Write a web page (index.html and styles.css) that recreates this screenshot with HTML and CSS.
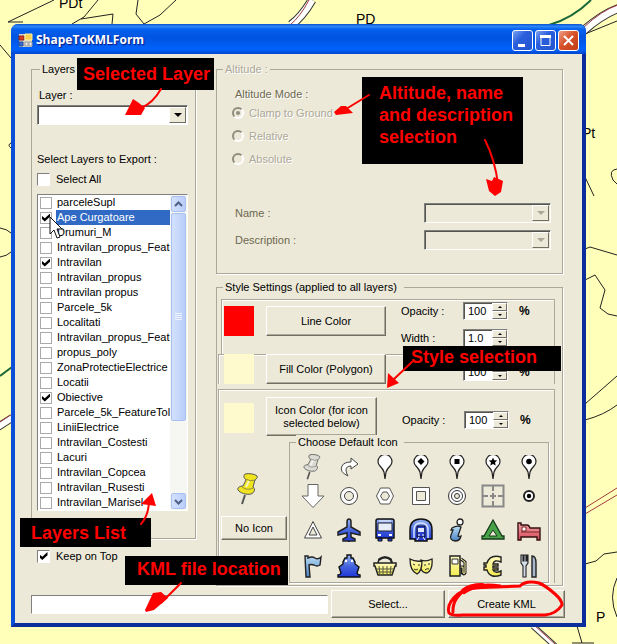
FILE: index.html
```html
<!DOCTYPE html>
<html lang="en">
<head>
<meta charset="utf-8">
<title>ShapeToKMLForm</title>
<link rel="stylesheet" href="styles.css">
</head>
<body>
<svg class="map" width="617" height="644" viewBox="0 0 617 644" aria-hidden="true">
  <g fill="none" stroke="#222" stroke-width="1">
    <path d="M8 22L54 0M8 22H23M72 24L84 17L98 0M81 19L113 14L112 24M138 0L136 14L144 24M144 24L160 15L176 0M0 45L11 58M11 143Q7 145 11 148M0 228Q7 229 11 233M0 257Q7 256 11 252"/>
    <path d="M585 249L590 247L617 255M585 280L595 275L599 281L605 290L600 308L608 314L617 316M617 169Q608 170 613 180L617 184M617 21L585 34M585 177L594 196M585 404L617 376M585 420Q604 415 617 405M585 564L596 561L604 554L617 552M617 578Q608 597 617 617M577 626L582 643M572 643H594"/>
  </g>
  <g fill="none">
    <path d="M312 0Q302 17 291 25" stroke="#333" stroke-width="9"/>
    <path d="M312 0Q302 17 291 25" stroke="#fff" stroke-width="7"/>
    <path d="M309 0Q300 17 290 25" stroke="#a23c40"/>
    <path d="M583 31Q604 13 620 8" stroke="#333" stroke-width="9"/>
    <path d="M583 31Q604 13 620 8" stroke="#fff" stroke-width="7"/>
    <path d="M583 28Q602 10 618 5" stroke="#a23c40"/>
    <path d="M-2 427L12 418" stroke="#333" stroke-width="8"/>
    <path d="M-2 427L12 418" stroke="#fff" stroke-width="6"/>
    <path d="M0 422L12 414" stroke="#a23c40"/>
    <path d="M533 626L555 646" stroke="#333" stroke-width="6"/>
    <path d="M533 626L555 646" stroke="#fff" stroke-width="4"/>
    <path d="M534 625L556 645M585 508L617 488M585 514L617 495" stroke="#a23c40"/>
    <path d="M549 25Q573 18 591 0M0 376L12 367" stroke="#1b6837" stroke-width="2"/>
  </g>
  <g class="map-text"><text x="59" y="8">PDt</text><text x="356" y="24">PD</text><text x="582" y="138">Pt</text><text x="596" y="622">P</text></g>
</svg>

<svg class="defs" width="0" height="0" aria-hidden="true">
  <symbol id="pin" viewBox="0 0 24 32">
    <path d="M8 22L5 31" stroke="#555" stroke-width="2"/>
    <path d="M8 1C12 0 18 1 20 3C21 5 19 6 18 7L16 14C19 16 17 20 14 21C9 22 3 20 1 17C0 14 4 13 6 13L9 7C7 5 6 3 8 1Z" fill="currentColor" stroke="#555"/>
    <path d="M9 6Q13 9 18 7M5 14Q10 18 16 15" fill="none" stroke="#555" stroke-opacity=".6"/>
    <path d="M12 8L9 14" stroke="#fff" stroke-opacity=".7" stroke-width="2"/>
  </symbol>
  <symbol id="balloon" viewBox="0 0 24 24">
    <path d="M12 24L11 17Q10 14 7 11Q5 9 5 6.500A7 7 0 0 1 19 6.500Q19 9 17 11Q14 14 13 17Z" fill="#fff" stroke="#222" stroke-width="1.200"/>
  </symbol>
  <linearGradient id="blue" x2="0" y2="1"><stop offset="0" stop-color="#9ab8f4"/><stop offset=".5" stop-color="#4565dc"/><stop offset="1" stop-color="#2038d8"/></linearGradient>
  <linearGradient id="sky" x2="0" y2="1"><stop offset="0" stop-color="#b8dcf4"/><stop offset="1" stop-color="#4b84c4"/></linearGradient>
  <linearGradient id="rose" x2="0" y2="1"><stop offset="0" stop-color="#f4a8ac"/><stop offset="1" stop-color="#d54858"/></linearGradient>
  <linearGradient id="lemon" x2="0" y2="1"><stop offset="0" stop-color="#fffbc0"/><stop offset="1" stop-color="#f4ec50"/></linearGradient>
</svg>

<main class="window">
  <header class="titlebar">
    <svg width="15" height="15" viewBox="0 0 15 15" aria-hidden="true"><path d="M1 1h13v13H1z" fill="#d8d6cc"/><path d="M1 3h5v4H1z" fill="#d83c28" stroke="#8c2410"/><path d="M7 1h7v6H7z" fill="#f8d050" stroke="#fff0a0"/><path d="M1 9h4v4H1z" fill="#3c6cd0" stroke="#234a9c"/><path d="M7 9h3v4H7zM11 9h3v4h-3z" fill="#eee" stroke="#999"/></svg>
    <h1>ShapeToKMLForm</h1>
    <button class="cap" aria-label="Minimize"><svg width="19" height="19"><path d="M5 13h7v3H5z" fill="#fff"/></svg></button>
    <button class="cap" aria-label="Maximize"><svg width="19" height="19"><path d="M5 6.500v8h9v-8z" fill="none" stroke="#fff"/><path d="M4 4h11v3H4z" fill="#fff"/></svg></button>
    <button class="cap close" aria-label="Close"><svg width="19" height="19"><path d="M5 5l9 9M14 5l-9 9" stroke="#fff" stroke-width="2"/></svg></button>
  </header>

  <form class="client">
    <div class="columns">
      <div class="left">
        <fieldset class="group layers">
          <legend>Layers</legend>
          <label class="layer-label" for="layer">Layer :</label>
          <div class="combo"><select id="layer"></select><span class="drop"></span></div>
          <p class="export">Select Layers to Export :</p>
          <label class="check"><input type="checkbox">Select All</label>
          <div class="list">
            <ul>
              <li><label><input type="checkbox"><span>parceleSupl</span></label></li>
              <li class="selected"><label><input type="checkbox" checked><span>Ape Curgatoare</span></label></li>
              <li><label><input type="checkbox"><span>Drumuri_M</span></label></li>
              <li><label><input type="checkbox"><span>Intravilan_propus_Featu</span></label></li>
              <li><label><input type="checkbox" checked><span>Intravilan</span></label></li>
              <li><label><input type="checkbox"><span>Intravilan_propus</span></label></li>
              <li><label><input type="checkbox"><span>Intravilan propus</span></label></li>
              <li><label><input type="checkbox"><span>Parcele_5k</span></label></li>
              <li><label><input type="checkbox"><span>Localitati</span></label></li>
              <li><label><input type="checkbox"><span>Intravilan_propus_Featu</span></label></li>
              <li><label><input type="checkbox"><span>propus_poly</span></label></li>
              <li><label><input type="checkbox"><span>ZonaProtectieElectrice</span></label></li>
              <li><label><input type="checkbox"><span>Locatii</span></label></li>
              <li><label><input type="checkbox" checked><span>Obiective</span></label></li>
              <li><label><input type="checkbox"><span>Parcele_5k_FeatureTol</span></label></li>
              <li><label><input type="checkbox"><span>LiniiElectrice</span></label></li>
              <li><label><input type="checkbox"><span>Intravilan_Costesti</span></label></li>
              <li><label><input type="checkbox"><span>Lacuri</span></label></li>
              <li><label><input type="checkbox"><span>Intravilan_Copcea</span></label></li>
              <li><label><input type="checkbox"><span>Intravilan_Rusesti</span></label></li>
              <li><label><input type="checkbox"><span>Intravilan_Marisel</span></label></li>
            </ul>
            <div class="scroll">
              <span class="arrow"><svg width="13" height="13"><path d="M3 8l3.500-3.500L10 8" fill="none" stroke="#4d6185" stroke-width="2"/></svg></span>
              <span class="thumb"><svg width="7" height="8"><path d="M0 .5h7M0 2.500h7M0 4.500h7M0 6.500h7" stroke="#eef4fe"/></svg></span>
              <span class="arrow end"><svg width="13" height="13"><path d="M3 5l3.500 3.500L10 5" fill="none" stroke="#4d6185" stroke-width="2"/></svg></span>
            </div>
          </div>
        </fieldset>
        <label class="check keep"><input type="checkbox" checked>Keep on Top</label>
      </div>

      <div class="right">
        <fieldset class="group altitude" disabled>
          <legend>Altitude :</legend>
          <p class="mode">Altitude Mode :</p>
          <label class="radio"><input type="radio" name="mode" checked>Clamp to Ground</label>
          <label class="radio"><input type="radio" name="mode">Relative</label>
          <label class="radio"><input type="radio" name="mode">Absolute</label>
          <div class="pair first"><label for="name">Name :</label><div class="combo"><select id="name"></select><span class="drop"></span></div></div>
          <div class="pair"><label for="desc">Description :</label><div class="combo"><select id="desc"></select><span class="drop"></span></div></div>
        </fieldset>

        <fieldset class="group style">
          <legend>Style Settings (applied to all layers)</legend>
          <section class="panel line">
            <span class="swatch red"></span>
            <button type="button" class="btn">Line Color</button>
            <div class="fields">
              <label for="o1">Opacity :</label><div class="spin"><input id="o1" value="100"><button type="button" aria-label="Up"></button><button type="button" class="down" aria-label="Down"></button></div><b>%</b>
              <label for="w1">Width :</label><div class="spin"><input id="w1" value="1.0"><button type="button" aria-label="Up"></button><button type="button" class="down" aria-label="Down"></button></div>
            </div>
          </section>
          <section class="panel fill">
            <span class="swatch"></span>
            <button type="button" class="btn">Fill Color (Polygon)</button>
            <div class="fields">
              <div class="spin"><input aria-label="Fill opacity" value="100"><button type="button" aria-label="Up"></button><button type="button" class="down" aria-label="Down"></button></div><b>%</b>
            </div>
          </section>
          <section class="panel icon">
            <div class="icon-top">
              <span class="swatch"></span>
              <button type="button" class="btn">Icon Color (for icon selected below)</button>
              <div class="fields">
                <label for="o3">Opacity :</label><div class="spin"><input id="o3" value="100"><button type="button" aria-label="Up"></button><button type="button" class="down" aria-label="Down"></button></div><b>%</b>
              </div>
            </div>
            <div class="icon-bottom">
              <div class="current">
                <svg class="pin-now" width="24" height="32"><use href="#pin"/></svg>
                <button type="button" class="btn">No Icon</button>
              </div>
              <fieldset class="group chooser">
                <legend>Choose Default Icon</legend>
                <div class="icons">
                  <button type="button" aria-label="Pushpin"><svg class="pin-grey"><use href="#pin"/></svg></button>
                  <button type="button" aria-label="Track"><svg><path d="M11 21Q2 17 5 11Q7 7 14 7V3L21 9L14 14V11Q9 11 9 15Q9 18 11 21Z" fill="#fff" stroke="#444"/></svg></button>
                  <button type="button" aria-label="Blank marker"><svg><use href="#balloon"/></svg></button>
                  <button type="button" aria-label="Diamond marker"><svg><use href="#balloon"/><path d="M12 3l3.500 3.500L12 10 8.500 6.500z"/></svg></button>
                  <button type="button" aria-label="Square marker"><svg><use href="#balloon"/><path d="M9.500 4h5v5h-5z"/></svg></button>
                  <button type="button" aria-label="Star marker"><svg><use href="#balloon"/><path d="M12 2.500l1.200 2.700 3 .3-2.200 2 .7 3L12 9l-2.700 1.500.7-3-2.200-2 3-.3z"/></svg></button>
                  <button type="button" aria-label="Circle marker"><svg><use href="#balloon"/><circle cx="12" cy="6.500" r="2.800"/></svg></button>

                  <button type="button" aria-label="Arrow"><svg><path d="M7 .5h10v11.500h6L12 23.500 1 12h6z" fill="#fff" stroke="#666"/></svg></button>
                  <button type="button" aria-label="Donut"><svg><g fill="#fff" stroke="#444"><circle cx="12" cy="12" r="8.500"/><circle cx="12" cy="12" r="4.500" fill="#ece9d8"/></g></svg></button>
                  <button type="button" aria-label="Polygon"><svg><g fill="#fff" stroke="#555"><path d="M7.500 4h9l4 8-4 8h-9l-4-8z"/><path d="M10 8h4l2.500 4L14 16h-4l-2.500-4z" fill="#ece9d8"/></g></svg></button>
                  <button type="button" aria-label="Square"><svg><path d="M3.500 3.500h17v17h-17z" fill="#fff" stroke="#555"/><path d="M7.500 7.500h9v9h-9z" fill="#ece9d8" stroke="#555"/></svg></button>
                  <button type="button" aria-label="Target"><svg><g fill="#fff" stroke="#333"><circle cx="12" cy="12" r="8.500"/><circle cx="12" cy="12" r="5.500"/><circle cx="12" cy="12" r="2.500" fill="#ece9d8"/></g></svg></button>
                  <button type="button" aria-label="Cross hairs"><svg><path d="M1.500 1.500h21v21h-21z" fill="none" stroke="#888" stroke-width="2"/><path d="M12 2v5M12 9v6M12 17v5M2 12h5M9 12h6M17 12h5" stroke="#888" stroke-width="2"/></svg></button>
                  <button type="button" aria-label="Dot"><svg><circle cx="12" cy="12" r="5" fill="#fff" stroke="#222" stroke-width="2"/><circle cx="12" cy="12" r="2.200"/></svg></button>

                  <button type="button" aria-label="Triangle"><svg><path d="M12 3.500L20.500 20h-17z" fill="#fff" stroke="#444"/><path d="M12 9l4 8H8z" fill="#ece9d8" stroke="#444"/></svg></button>
                  <button type="button" aria-label="Airport"><svg><path d="M12 1q2 0 2 3v5l9 5v3l-9-2v4l4 2v2h-5l-1 1-1-1H6v-2l4-2v-4l-9 2v-3l9-5V4q0-3 2-3z" fill="url(#blue)" stroke="#222" stroke-width="1.500"/></svg></button>
                  <button type="button" aria-label="Bus"><svg><path d="M5 20h4v3H5zM15 20h4v3h-4z" stroke="#111" fill="#2038d8"/><path d="M5 1h14q2 0 2 2v17H3V3q0-2 2-2z" fill="url(#blue)" stroke="#111" stroke-width="1.500"/><path d="M5 5h14v8H5z" fill="#e6ecf8" stroke="#223"/><path d="M6 3h12" stroke="#fff"/><path d="M5 17h3M16 17h3" stroke="#fff" stroke-width="2"/></svg></button>
                  <button type="button" aria-label="Rail"><svg><path d="M1 21V12Q1 1 12 1t11 11v9h-5v2H6v-2z" fill="url(#blue)" stroke="#111" stroke-width="1.500"/><path d="M5 20V12Q5 5 12 5t7 7v8" fill="none" stroke="#d6e2ff" stroke-width="1.500"/><path d="M8 8h8v11H8z" fill="#263cce" stroke="#112"/><path d="M9 10h6v4H9z" fill="#dfe8fa"/><path d="M9 17h2M13 17h2M8 22l2-3M16 22l-2-3" stroke="#fff"/></svg></button>
                  <button type="button" aria-label="Info"><svg><circle cx="15" cy="4" r="3" fill="#fff" stroke="#222" stroke-width="1.300"/><path d="M7 10q5-3 9-1l-3 9q1 1 3 0-1 5-6 5-6-1-4-6l2-5H6z" fill="url(#sky)" stroke="#222" stroke-width="1.300"/></svg></button>
                  <button type="button" aria-label="Campground"><svg><path d="M12 2l9 16h2v3H1v-3h2z" fill="#48a348" stroke="#173b1a" stroke-width="1.300"/><path d="M12 12l4 6H8z" fill="#ece9d8" stroke="#173b1a"/></svg></button>
                  <button type="button" aria-label="Lodging"><svg><path d="M1 5h3v2h6q2 0 3 3h10v12h-3v-3H4v3H1z" fill="url(#rose)" stroke="#311" stroke-width="1.400"/><path d="M4 14h19" stroke="#722"/><path d="M5 9h4v4H5z" fill="#fff" stroke="#722"/></svg></button>

                  <button type="button" aria-label="Flag"><svg><path d="M4 2h3v2q4-2 7 0 3 2 6-1l-1 8q-3 2-6 0-3-1-5 0l1 12H5z" fill="url(#sky)" stroke="#222" stroke-width="1.400"/></svg></button>
                  <button type="button" aria-label="Marina"><svg><path d="M8 4h2V1h4v3h2l2 4v2l4 3-2 6q1 2 3 2v2H1v-2q2 0 3-2l-2-6 4-3V8z" fill="url(#blue)" stroke="#111" stroke-width="1.400"/><path d="M8 7h2M14 7h2" stroke="#fff" stroke-width="2"/></svg></button>
                  <button type="button" aria-label="Grocery"><svg><path d="M6 6q6-5 12 0l1 4" fill="none" stroke="#222" stroke-width="2"/><path d="M5 9l1-4q6-4 12 0l1 4" fill="none" stroke="#222" stroke-width="1.500"/><path d="M1 9h22v3h-1l-3 9H5l-3-9H1z" fill="url(#lemon)" stroke="#222" stroke-width="1.500"/><path d="M6 12l1 9M10 12v9M14 12v9M18 12l-1 9M3 15h18M4 18h16" stroke="#554"/></svg></button>
                  <button type="button" aria-label="Arts"><svg><path d="M12 6q5 2 11-1 1 11-5 14-5 0-7-6z" fill="url(#lemon)" stroke="#222" stroke-width="1.300"/><path d="M1 5q5 3 12 2 0 10-5 13-7-3-7-15z" fill="url(#lemon)" stroke="#222" stroke-width="1.300"/><path d="M4 10l2 1M9 11h2M5 15q2 2 4 0M15 11h2M19 10h2M16 16q2-2 4-1" fill="none" stroke="#333"/></svg></button>
                  <button type="button" aria-label="Gas"><svg><path d="M16 5l4 3v11q-1 2-3 0v-6h-2" fill="none" stroke="#222" stroke-width="3"/><path d="M16 5l4 3v11q-1 1-2 0v-6h-3" fill="none" stroke="#f7f0a0"/><path d="M5 2h10v20H5z" fill="url(#lemon)" stroke="#222" stroke-width="1.500"/><path d="M7 5h6v5H7z" fill="#fff" stroke="#333"/></svg></button>
                  <button type="button" aria-label="Euro"><svg><path d="M20 3v5q-7-3-8 2h5v2h-5v2h5v2h-5q2 4 8 1v4q-11 4-14-5H3v-3h2v-2H3V9h3Q9 0 20 3z" fill="url(#lemon)" stroke="#222" stroke-width="1.400"/></svg></button>
                  <button type="button" aria-label="Dining"><svg><path d="M5 1h1v6h1V1h2v6h1V1h1v8l-2 3v11H6V12L4 9V1z" fill="#d4dce8" stroke="#222" stroke-width="1.100"/><path d="M15 23V2q4 0 4 7v14z" fill="#a8b8cc" stroke="#222" stroke-width="1.400"/></svg></button>
                </div>
              </fieldset>
            </div>
          </section>
        </fieldset>
      </div>
    </div>
    <div class="actions">
      <input class="path" type="text" aria-label="KML file">
      <button type="button" class="btn">Select...</button>
      <button type="button" class="btn">Create KML</button>
    </div>
  </form>
</main>

<svg class="cursor" width="14" height="23" viewBox="0 0 14 23" aria-hidden="true"><path d="M1 1v17l4-4 3 8 3-1-3-8h5z" fill="#fff" stroke="#111"/></svg>

<aside class="notes">
  <p class="note n-layer">Selected Layer</p>
  <p class="note n-altitude">Altitude, name and description selection</p>
  <p class="note n-style">Style selection</p>
  <p class="note n-list">Layers List</p>
  <p class="note n-file">KML file location</p>
  <svg class="strokes" width="617" height="644" viewBox="0 0 617 644" aria-hidden="true">
    <g fill="none" stroke="#f00" stroke-width="2" stroke-linecap="round">
      <path d="M161 89Q153 103 141 108M369 95L346 109M485 140Q495 160 498 184M412 362L393 380M141 524Q149 515 149 500M181 583L161 603"/>
      <path d="M500 586Q475 582 458 594Q446 604 449 613Q452 616 462 615H545Q556 614 562 605Q562 600 555 594Q546 586 539 583Q526 580 520 586L468 588Q452 598 453 612" stroke-width="3"/>
      <path d="M482 586Q470 586 464 591" stroke-width="6"/>
    </g>
    <g fill="#f00">
      <path d="M125 115L133 99L139 103L145 108L141 115Z"/>
      <path d="M334 112L341 106L346 106L353 113L336 115Z"/>
      <path d="M486 179L492 181L494 177L503 181L501 192L495 196L489 191Z"/>
      <path d="M387 388L388 373L399 383Z"/>
      <path d="M152 493L141 504L156 506Z"/>
      <path d="M145 610L153 593L161 592L168 598L154 610L146 612Z"/>
    </g>
  </svg>
</aside>
</body>
</html>
```
FILE: styles.css
```css
* { box-sizing: border-box; }

body {
  margin: 0;
  position: relative;
  display: flow-root;
  background: #ffffb9;
  color: #000;
  font: 11px/14px "Liberation Sans", Arial, sans-serif;
  overflow: hidden;
}

p, h1, ul { margin: 0; padding: 0; }
ul { list-style: none; }
button, input, select { font: inherit; color: inherit; margin: 0; padding: 0; border-radius: 0; }
svg { display: block; }

.map { position: absolute; left: 0; top: 0; }
.map-text { font: 14px "Liberation Sans", Arial, sans-serif; }
.defs { position: absolute; }

.window {
  position: relative;
  margin: 24px 31px 18px 11px;
  border: 4px solid #1a48c4;
  border-top: 0;
  border-left-color: #0b4fd8;
  border-right-color: #0a2c9c;
  border-bottom-color: #0c2f9c;
  border-radius: 7px 7px 0 0;
  background: #ece9d8;
}

.titlebar {
  display: flex;
  align-items: center;
  gap: 2px;
  height: 30px;
  margin: 0 -4px;
  padding: 2px 7px 0 7px;
  border-radius: 7px 7px 0 0;
  background: linear-gradient(#0a50cc, #2c86f8 8%, #0560ee 18%, #0054e0 45%, #0062fc 85%, #0046cc);
}
.titlebar h1 {
  flex: 1;
  padding-left: 1px;
  color: #fff;
  font: bold 12px/18px "Open Sans", sans-serif;
  text-shadow: 1px 1px 1px #0a1883;
}
.cap {
  width: 21px;
  height: 21px;
  border: 1px solid #fff;
  border-radius: 3px;
  background: linear-gradient(135deg, #7ba2f0, #2a5fdc 40%, #2454d0);
}
.close { background: linear-gradient(135deg, #eca088, #d8532c 45%, #c03c14); }

.client { padding: 8px 16px 5px; }
.columns { display: grid; grid-template-columns: 165px 1fr; gap: 20px; padding-right: 3px; }

.group {
  min-width: 0;
  margin: 0;
  padding: 0;
  border: 1px solid #aca899;
  box-shadow: 1px 1px 0 #fff;
}
legend { padding: 0 2px; background: #ece9d8; }

.layers { padding: 12px 7px 27px 5px; }
.layers legend { margin-left: 3px; }
.layer-label { display: block; margin: 0 2px 3px; }
.export { margin: 27px 0 6px; }
.check { display: flex; align-items: center; gap: 6px; }
.keep { margin: 10px 0 0 6px; }

.combo {
  display: flex;
  height: 20px;
  border: 1px solid #808080;
  border-right-color: #fff;
  border-bottom-color: #fff;
  background: #fff;
  box-shadow: inset 1px 1px 0 #55554c;
}
.combo select { flex: 1; min-width: 0; border: 0; appearance: none; background: none; }
.drop {
  display: grid;
  place-items: center;
  width: 17px;
  margin: 1px;
  border: 1px solid #fff;
  border-right-color: #716f64;
  border-bottom-color: #716f64;
  background: #ece9d8;
}
.drop::before { content: ""; border: 4px solid transparent; border-top-color: #000; border-bottom: 0; }

input[type=checkbox] {
  flex: none;
  appearance: none;
  display: grid;
  place-items: center;
  width: 13px;
  height: 13px;
  border: 1px solid #808080;
  border-right-color: #fff;
  border-bottom-color: #fff;
  background: #fff;
}
input[type=checkbox]:checked::before {
  content: "";
  width: 8px;
  height: 8px;
  background: #000;
  clip-path: polygon(0 30%, 35% 60%, 100% 0, 100% 40%, 35% 100%, 0 70%);
}

.list {
  display: flex;
  margin-top: 8px;
  border: 1px solid #808080;
  border-right-color: #fff;
  border-bottom-color: #fff;
  background: #fff;
}
.list ul { flex: 1; min-width: 0; overflow: hidden; padding-left: 2px; }
.list label { display: flex; align-items: center; gap: 4px; height: 15px; white-space: nowrap; }
.list label span { flex: 1; line-height: 15px; padding-left: 1px; }
.list input[type=checkbox] { width: 12px; height: 12px; border: 1px solid #aaa; }
.selected span { background: #316ac5; color: #fff; }
.scroll { display: flex; flex-direction: column; width: 17px; padding: 1px; background: #f6f6f2; }
.arrow, .thumb {
  display: grid;
  place-items: center;
  height: 16px;
  border: 1px solid #a9c0f0;
  border-radius: 2px;
  background: linear-gradient(90deg, #d3e1fd, #b9cdf9);
}
.thumb { height: 208px; margin-top: 1px; }
.end { margin-top: auto; }

.altitude { padding: 11px 11px 20px 15px; color: #aca899; text-shadow: 1px 1px 0 #fff; }
.altitude legend { margin-left: -9px; }
.mode { margin-left: 3px; color: #6d6850; }
.radio { display: flex; align-items: center; gap: 5px; height: 23px; }
input[type=radio] {
  appearance: none;
  display: grid;
  place-items: center;
  width: 12px;
  height: 12px;
  border: 2px solid #918d7e;
  border-right-color: #fff;
  border-bottom-color: #fff;
  border-radius: 50%;
}
input[type=radio]:checked::before { content: ""; width: 4px; height: 4px; border-radius: 50%; background: #918d7e; }
.pair { display: flex; align-items: center; justify-content: space-between; height: 27px; padding-left: 3px; color: #6d6850; text-shadow: none; }
.first { margin-top: 29px; }
.pair .combo { width: 127px; background: #ece9d8; }
.pair .drop::before { border-top-color: #aca899; }

.style { margin-top: 6px; padding: 5px 7px 2px 1px; }
.style > legend { padding-right: 7px; margin-left: 5px; }
.panel { border: 1px solid #aca899; border-bottom: 0; box-shadow: inset 1px 1px 0 #fff; }
.line, .fill, .icon-top { display: flex; align-items: flex-start; }
.line { height: 55px; margin-left: 3px; padding: 0 0 0 2px; }
.fill { height: 30px; padding-left: 5px; margin-bottom: 5px; }
.icon-top { height: 45px; padding-left: 5px; }
.swatch { flex: none; width: 30px; height: 30px; background: #fffacd; }
.red { background: #f00; }
.line .swatch, .line .btn { margin-top: 6px; }
.icon-top .swatch { margin-top: 13px; }
.fill .swatch, .fill .btn { margin-top: -1px; }

.btn {
  border: 1px solid #fff;
  border-right-color: #716f64;
  border-bottom-color: #716f64;
  background: #ece9d8;
  box-shadow: inset -1px -1px 0 #aca899;
}
.line .btn, .fill .btn, .icon-top .btn { flex: none; width: 120px; height: 30px; margin-left: 12px; }
.icon-top .btn { width: 111px; height: 39px; margin-top: 7px; line-height: 13px; }

.fields {
  display: grid;
  grid-template-columns: 62px 45px auto;
  row-gap: 9px;
  align-items: center;
  margin-left: 15px;
  padding-top: 2px;
}
.fields b { margin-left: 11px; font-size: 12px; }
.fill .fields { padding-top: 8px; }
.fill .spin { grid-column: 2; }
.icon-top .fields { margin-left: 25px; padding-top: 21px; }

.spin {
  display: grid;
  grid-template: 8px 8px / 1fr 15px;
  height: 18px;
  border: 1px solid #808080;
  border-right-color: #fff;
  border-bottom-color: #fff;
  background: #fff;
  box-shadow: inset 1px 1px 0 #55554c;
}
.spin input { grid-row: 1 / 3; min-width: 0; padding-left: 4px; border: 0; background: none; }
.spin button {
  display: grid;
  place-items: center;
  border: 1px solid #fff;
  border-right-color: #716f64;
  border-bottom-color: #716f64;
  background: #ece9d8;
}
.spin button::before { content: ""; border: 2px solid transparent; border-bottom-color: #000; border-top: 0; }
.spin .down::before { border-top: 2px solid #000; border-bottom: 0; }

.icon-bottom { display: grid; grid-template-columns: 66px 1fr; gap: 2px; padding: 0 5px 0 2px; }
.current { display: flex; flex-direction: column; padding-top: 38px; }
.pin-now { margin-left: 16px; color: #f0e420; }
.current .btn { height: 24px; margin-top: 11px; }
.chooser { padding: 4px 0 0 5px; }
.chooser legend { margin-left: 1px; padding-right: 6px; }
.icons { display: grid; grid-template: 28px 30px 38px 33px / repeat(7, 36px); place-items: center; }
.icons button { border: 0; background: none; }
.icons svg { width: 24px; height: 24px; }
.icons .pin-grey { width: 20px; height: 26px; color: #dddcd4; }

.actions { display: grid; grid-template-columns: 1fr 114px 117px; gap: 3px; margin-top: 4px; padding-right: 1px; align-items: center; }
.actions .btn { height: 28px; }
.path {
  min-width: 0;
  height: 19px;
  border: 1px solid #808080;
  border-right-color: #fff;
  border-bottom-color: #fff;
  background: #fff;
}

.cursor { position: absolute; left: 49px; top: 216px; }
.notes { position: absolute; left: 0; top: 0; pointer-events: none; }
.strokes { position: relative; }
.note { position: absolute; background: #000; color: #f00; font-weight: bold; font-size: 18px; line-height: 22px; white-space: nowrap; }
.n-layer { left: 77px; top: 58px; width: 137px; height: 32px; padding: 5px 0 0 6px; }
.n-altitude { left: 362px; top: 77px; width: 161px; height: 87px; padding: 5px 0 0 17px; white-space: normal; }
.n-style { left: 403px; top: 346px; width: 158px; height: 25px; padding-left: 8px; }
.n-list { left: 20px; top: 518px; width: 131px; height: 29px; padding: 4px 0 0 11px; }
.n-file { left: 125px; top: 556px; width: 163px; height: 29px; padding: 2px 0 0 12px; }
```
